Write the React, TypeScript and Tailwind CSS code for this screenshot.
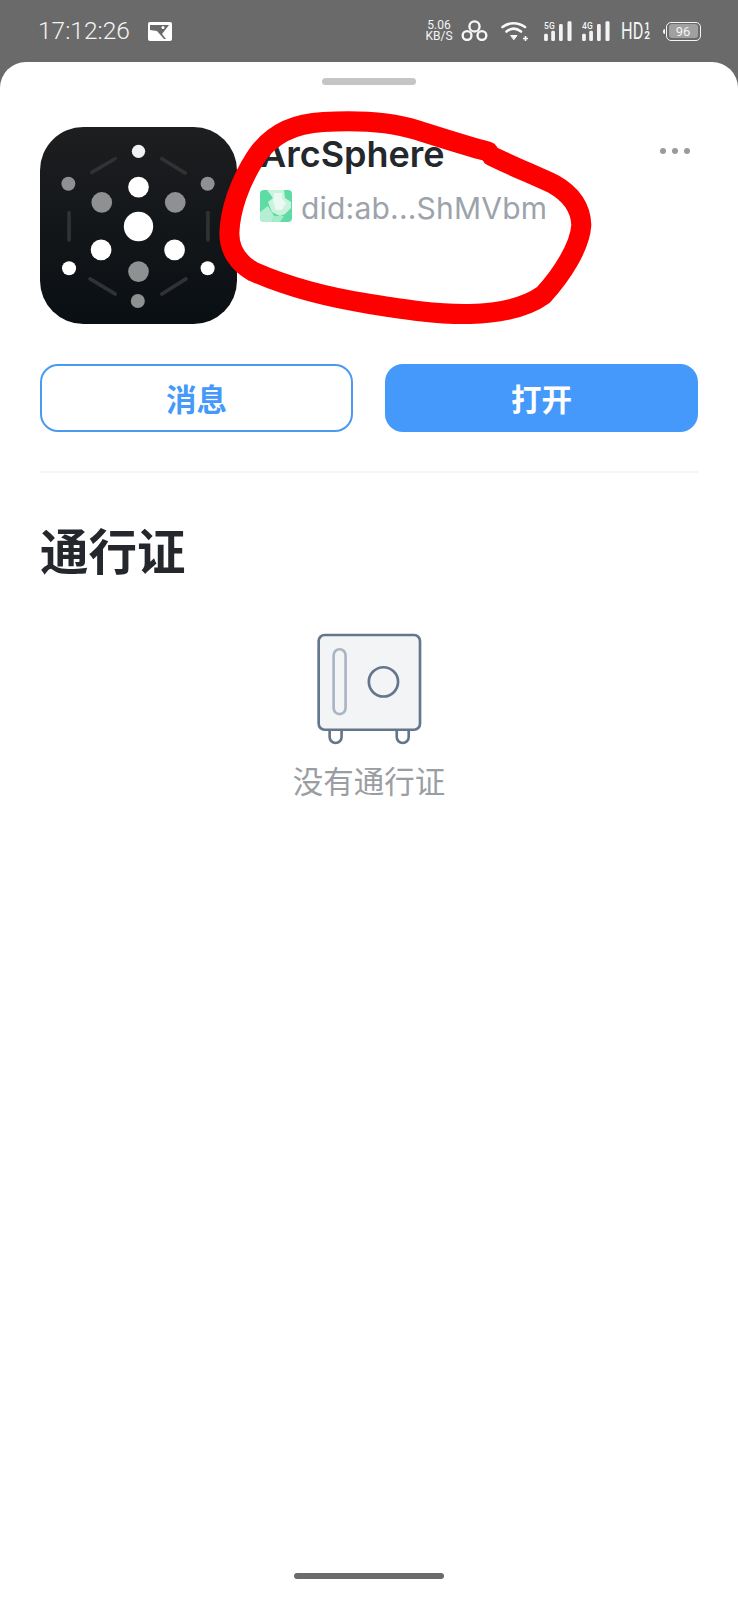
import React from 'react';

const cjk = '"Noto Sans CJK SC", sans-serif';

function SignalIcon({ label }: { label: string }) {
  return (
    <svg viewBox="523 63 82 62" className="w-[28px] h-[21px] ml-[10px]" fill="#f4f4f4">
      <text x="523" y="87" fontSize="25" fontFamily="Roboto, sans-serif" fontWeight="500">{label}</text>
      <rect x="523" y="101" width="11" height="21" rx="4" />
      <rect x="544" y="92" width="11" height="30" rx="4" />
      <rect x="567" y="72" width="11" height="50" rx="4" />
      <rect x="592" y="64" width="12" height="58" rx="4" />
    </svg>
  );
}

function ArcLogo() {
  const white = '#ffffff';
  const gray = '#8f9091';
  const dots: [number, number, number, string][] = [
    [355, 125, 20, '#f2f2f2'],
    [145, 222, 21, gray],
    [562, 222, 21, gray],
    [355, 232, 31, white],
    [245, 278, 31, gray],
    [465, 278, 31, gray],
    [355, 350, 44, white],
    [243, 420, 31, white],
    [463, 420, 31, white],
    [147, 475, 21, white],
    [562, 475, 21, white],
    [355, 485, 31, gray],
    [353, 573, 21, gray],
  ];
  const lines = [
    'M215 188L285 147',
    'M425 147L495 190',
    'M147 308V390',
    'M563 308V390',
    'M210 507L285 552',
    'M425 552L497 507',
  ];
  return (
    <svg viewBox="60 52 590 590" className="w-[197px] h-[197px] shrink-0">
      <defs>
        <linearGradient id="logoBg" x1="0" y1="0" x2="0" y2="1">
          <stop offset="0" stopColor="#1d1e20" />
          <stop offset="1" stopColor="#0a0f13" />
        </linearGradient>
      </defs>
      <rect x="60" y="52" width="590" height="590" rx="130" fill="url(#logoBg)" />
      {lines.map((d) => (
        <path key={d} d={d} stroke="#303234" strokeWidth="11" strokeLinecap="round" />
      ))}
      {dots.map(([x, y, r, c]) => (
        <circle key={`${x}-${y}`} cx={x} cy={y} r={r} fill={c} />
      ))}
    </svg>
  );
}

export default function App() {
  return (
    <div className="relative w-[738px] h-[1600px] overflow-hidden bg-[#6a6a6a] flex flex-col">
      {/* Status bar */}
      <div className="h-[62px] shrink-0 flex items-center pl-[38px] pr-[37px] text-[#f4f4f4]">
        <span className="text-[24.500px] font-light leading-none" style={{ fontFamily: 'Roboto, sans-serif' }}>
          17:12:26
        </span>
        <svg viewBox="0 0 24 19" className="w-[24px] h-[19px] ml-[18px]">
          <rect width="24" height="19" rx="2" fill="#ffffff" />
          <path d="M2 3H21L14 12L18 17H16L9 9L2 8Z" fill="#6a6a6a" />
          <circle cx="15" cy="5.500" r="1.500" fill="#ffffff" />
        </svg>
        <div className="ml-auto flex items-center">
          <div className="flex flex-col items-center text-[12px] leading-[11px] w-[26px]" style={{ fontFamily: 'Roboto, sans-serif' }}>
            <span>5.06</span>
            <span>KB/S</span>
          </div>
          <svg viewBox="125 25 80 62" className="w-[27px] h-[21px] ml-[9px] -translate-y-[1px]" fill="none" stroke="#f8f8f8" strokeWidth="7">
            <circle cx="165" cy="44" r="15" />
            <circle cx="143" cy="71" r="13" />
            <circle cx="187" cy="71" r="13" />
          </svg>
          <svg viewBox="0 0 27 20" className="w-[27px] h-[20px] ml-[13px]" fill="none" stroke="#f8f8f8" strokeLinecap="round">
            <path d="M1.500 6C8 1 17 1 24 6" strokeWidth="2.600" />
            <path d="M5.500 10.500C10 7 15.500 7 20 10.500" strokeWidth="2.600" />
            <path d="M10 14.500H16L13 18.500Z" fill="#f8f8f8" strokeWidth="1" />
            <path d="M22 17.500H27M24.500 15V20" strokeWidth="1.600" strokeLinecap="butt" />
          </svg>
          <div className="ml-[6px]">
            <SignalIcon label="5G" />
          </div>
          <SignalIcon label="4G" />
          <div className="ml-[11px] flex items-center leading-none" style={{ fontFamily: 'Roboto, sans-serif' }}>
            <span className="w-[22px] text-[24px] scale-x-[0.68] origin-left">HD</span>
            <div className="flex flex-col items-center text-[10px] leading-[9px] font-bold ml-[1px] w-[6px]">
              <span>1</span>
              <span>2</span>
            </div>
          </div>
          <div className="ml-[13px] flex items-center">
            <div className="w-[2px] h-[5px] bg-[#f4f4f4] rounded-l-sm mr-[1px]" />
            <div className="w-[35px] h-[19px] rounded-[5px] border-[1.5px] border-[#f4f4f4] p-[1.5px]">
              <div className="h-full w-[29px] rounded-[3px] bg-[#a0a0a0] flex items-center justify-center text-[13px] leading-none" style={{ fontFamily: 'Roboto, sans-serif' }}>
                96
              </div>
            </div>
          </div>
        </div>
      </div>

      {/* Sheet */}
      <div className="flex-1 bg-white rounded-t-[26px] flex flex-col px-[40px]">
        <div className="self-center mt-[16px] w-[94px] h-[7px] rounded-full bg-[#c4c5c7]" />

        <div className="flex mt-[42px]">
          <ArcLogo />
          <div className="ml-[23px] flex-1 min-w-0" style={{ fontFamily: 'Inter, sans-serif' }}>
            <div className="mt-[5px] text-[36px] leading-[44px] font-semibold text-[#24272b]">ArcSphere</div>
            <div className="mt-[13px] flex items-center">
              <svg viewBox="0 0 32 32" className="w-[32px] h-[32px] shrink-0">
                <rect width="32" height="32" rx="4" fill="#5fdca4" />
                <path d="M7 0H24L25 8L31 12V18L25 24L20 26L12 22L8 12L13 8Z" fill="#c9f3df" />
                <path d="M0 22L8 16L14 26L12 32H4Q0 32 0 28Z" fill="#b4eed3" />
                <path d="M14 3H22V9L26 13L22 20H16L13 10Z" fill="#eafaf3" />
                <path d="M14 26L24 26L20 32H12Z" fill="#a4ebca" />
              </svg>
              <span className="ml-[9px] mt-[4px] text-[30px] leading-none text-[#9ca3ab] tracking-[0.2px]">did:ab...ShMVbm</span>
            </div>
          </div>
          <div className="flex gap-[6px] mt-[21px] shrink-0 mr-[8px]">
            <div className="w-[6px] h-[6px] rounded-full bg-[#9a9a9a]" />
            <div className="w-[6px] h-[6px] rounded-full bg-[#9a9a9a]" />
            <div className="w-[6px] h-[6px] rounded-full bg-[#9a9a9a]" />
          </div>
        </div>

        <div className="grid grid-cols-2 gap-[32px] mt-[40px]" style={{ fontFamily: cjk }}>
          <button className="h-[68px] rounded-[18px] border-2 border-[#4a9bf0] bg-white text-[#4499fa] text-[30.500px] font-bold leading-none">
            消息
          </button>
          <button className="h-[68px] rounded-[18px] bg-[#4499fb] text-white text-[30.500px] font-bold leading-none">
            打开
          </button>
        </div>

        <div className="mt-[39px] h-[2px] bg-[#f4f5f6]" />

        <h2 className="mt-[44px] text-[48.500px] leading-[64px] font-bold text-[#24272b]" style={{ fontFamily: cjk }}>
          通行证
        </h2>

        <div className="flex flex-col items-center mt-[52px]">
          <svg viewBox="140 36 316 340" className="w-[105px] h-[113px]" fill="none">
            <path d="M178 327V349A18 18 0 0 0 214 349V327" stroke="#64768c" strokeWidth="8" fill="#ffffff" />
            <path d="M380 327V349A18 18 0 0 0 416 349V327" stroke="#64768c" strokeWidth="8" fill="#ffffff" />
            <rect x="145" y="42" width="305" height="285" rx="18" fill="#f2f4f6" stroke="#64768c" strokeWidth="8" />
            <rect x="190" y="85" width="36" height="195" rx="18" stroke="#aab5c3" strokeWidth="8" />
            <circle cx="340" cy="183" r="44" stroke="#64768c" strokeWidth="8" />
          </svg>
          <p className="mt-[14px] text-[30.500px] leading-[40px] text-[#9a9ea3]" style={{ fontFamily: cjk }}>
            没有通行证
          </p>
        </div>

        <div className="mt-auto mb-[21px] self-center w-[150px] h-[6px] rounded-full bg-[#6b6b6b]" />
      </div>

      {/* Red marker scribble on top of the screenshot */}
      <svg viewBox="0 0 1200 720" className="absolute left-[210px] top-[100px] w-[400px] h-[240px]" fill="none">
        <path
          d="M835 155C760 135 690 112 620 90C540 65 440 60 340 66C250 70 180 105 135 175C90 245 60 330 58 400C58 450 85 490 130 515C220 555 340 590 480 612C580 628 680 644 780 642C860 640 940 628 1000 585C1055 525 1110 440 1114 375C1112 320 1080 280 1030 252C960 220 900 195 845 168"
          stroke="#ff0000"
          strokeWidth="60"
          strokeLinecap="round"
          strokeLinejoin="round"
        />
      </svg>
    </div>
  );
}
